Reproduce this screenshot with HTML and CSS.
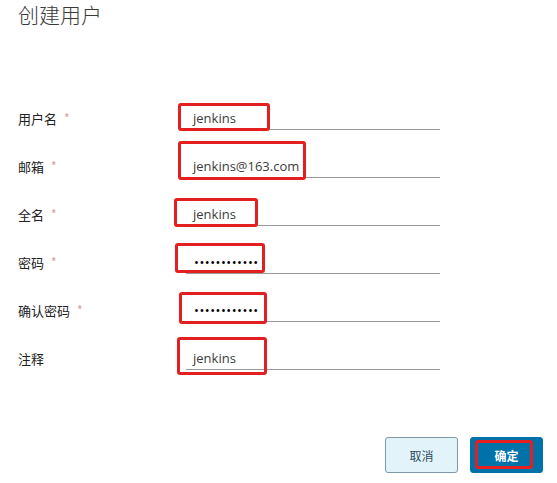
FILE: index.html
```
<!DOCTYPE html>
<html lang="zh-CN">
<head>
<meta charset="utf-8">
<title>创建用户</title>
<link rel="stylesheet" href="styles.css">
</head>
<body>
<div class="page">
  <h1 class="title">创建用户</h1>
  <form class="form">
    <div class="row">
      <label class="label">用户名<span class="req">*</span></label>
      <div class="field"><span class="value">jenkins</span><span class="mark mark-1"></span></div>
    </div>
    <div class="row">
      <label class="label">邮箱<span class="req">*</span></label>
      <div class="field"><span class="value">jenkins@163.com</span><span class="mark mark-2"></span></div>
    </div>
    <div class="row">
      <label class="label">全名<span class="req">*</span></label>
      <div class="field"><span class="value">jenkins</span><span class="mark mark-3"></span></div>
    </div>
    <div class="row">
      <label class="label">密码<span class="req">*</span></label>
      <div class="field"><span class="value dots">••••••••••••</span><span class="mark mark-4"></span></div>
    </div>
    <div class="row">
      <label class="label">确认密码<span class="req">*</span></label>
      <div class="field"><span class="value dots">••••••••••••</span><span class="mark mark-5"></span></div>
    </div>
    <div class="row">
      <label class="label">注释</label>
      <div class="field"><span class="value">jenkins</span><span class="mark mark-6"></span></div>
    </div>
  </form>
  <div class="actions">
    <button class="btn btn-cancel" type="button">取消</button>
    <button class="btn btn-ok" type="button">确定<span class="mark mark-btn"></span></button>
  </div>
</div>
</body>
</html>
```
FILE: styles.css
```
* { box-sizing: border-box; }
html, body {
  margin: 0;
  padding: 0;
  background: #ffffff;
}
body {
  font-family: "Open Sans", "Noto Sans CJK SC", sans-serif;
  color: #333333;
}
.page {
  width: 557px;
  height: 483px;
  padding: 1px 14px 0 18px;
}
.title {
  margin: 0;
  font-family: "Noto Sans CJK SC", sans-serif;
  font-size: 21px;
  font-weight: 300;
  line-height: 26px;
  color: #3a3a3a;
}
.form {
  margin-top: 67px;
  display: flex;
  flex-direction: column;
}
.row {
  height: 48px;
  display: flex;
  align-items: center;
}
.label {
  width: 168px;
  font-family: "Noto Sans CJK SC", sans-serif;
  font-size: 13px;
  color: #222222;
  display: flex;
  align-items: center;
}
.req {
  margin-left: 7px;
  color: #d99aa2;
  font-size: 12px;
  position: relative;
  top: -1px;
}
.field {
  position: relative;
  width: 254px;
  height: 24px;
  border-bottom: 1px solid #9a9a9a;
  display: flex;
  align-items: center;
  padding-left: 7px;
}
.value {
  font-family: "Open Sans", sans-serif;
  font-size: 13px;
  color: #3c3c3c;
}
.dots {
  color: #000000;
  font-size: 13px;
  letter-spacing: 0.5px;
  padding-left: 1px;
}
.mark {
  position: absolute;
  border: 3px solid #e3201f;
  border-radius: 3px;
  pointer-events: none;
}
.mark-1 { left: -8px; top: -3px; width: 92px; height: 28px; }
.mark-2 { left: -8px; top: -13px; width: 128px; height: 39px; }
.mark-3 { left: -12px; top: -4px; width: 84px; height: 29px; }
.mark-4 { left: -11px; top: -7px; width: 90px; height: 30px; }
.mark-5 { left: -7px; top: -6px; width: 88px; height: 32px; }
.mark-6 { left: -9px; top: -9px; width: 90px; height: 38px; }
.actions {
  margin-top: 55px;
  display: flex;
  justify-content: flex-end;
  gap: 12px;
}
.btn {
  position: relative;
  width: 73px;
  height: 36px;
  border-radius: 3px;
  font-family: "Noto Sans CJK SC", sans-serif;
  font-size: 12px;
  padding: 0;
  cursor: pointer;
}
.btn-cancel {
  background: #e3f3fa;
  border: 1px solid #7e9aa8;
  color: #2b4a5a;
}
.btn-ok {
  background: #0072aa;
  border: 1px solid #0072aa;
  color: #ffffff;
  font-weight: 700;
}
.mark-btn { left: 4px; top: 2px; width: 58px; height: 29px; }
```
